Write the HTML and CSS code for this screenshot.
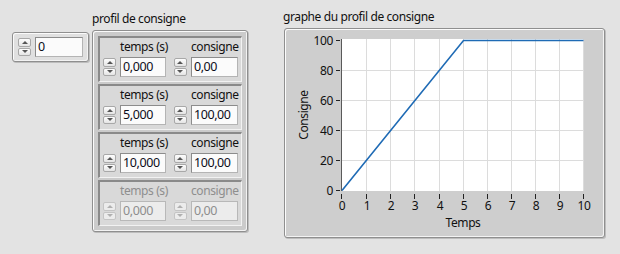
FILE: index.html
```html
<!DOCTYPE html>
<html lang="fr">
<head>
  <meta charset="UTF-8">
  <title>Profil de consigne</title>
  <link rel="stylesheet" href="styles.css">
</head>
<body>

  <div class="panel">

    <!-- array index -->
    <div class="index-ctl">
      <div class="spin"><span class="up"></span><span class="dn"></span></div>
      <div class="num w48">0</div>
    </div>

    <div class="array-col">
      <div class="caption">profil de consigne</div>
      <div class="array">
        <div class="elem">
          <div class="field">
            <div class="flabel">temps (s)</div>
            <div class="row">
              <div class="spin"><span class="up"></span><span class="dn"></span></div>
              <div class="num w46">0,000</div>
            </div>
          </div>
          <div class="field">
            <div class="flabel">consigne</div>
            <div class="row">
              <div class="spin"><span class="up"></span><span class="dn"></span></div>
              <div class="num w47">0,00</div>
            </div>
          </div>
        </div>
        <div class="elem">
          <div class="field">
            <div class="flabel">temps (s)</div>
            <div class="row">
              <div class="spin"><span class="up"></span><span class="dn"></span></div>
              <div class="num w46">5,000</div>
            </div>
          </div>
          <div class="field">
            <div class="flabel">consigne</div>
            <div class="row">
              <div class="spin"><span class="up"></span><span class="dn"></span></div>
              <div class="num w47">100,00</div>
            </div>
          </div>
        </div>
        <div class="elem">
          <div class="field">
            <div class="flabel">temps (s)</div>
            <div class="row">
              <div class="spin"><span class="up"></span><span class="dn"></span></div>
              <div class="num w46">10,000</div>
            </div>
          </div>
          <div class="field">
            <div class="flabel">consigne</div>
            <div class="row">
              <div class="spin"><span class="up"></span><span class="dn"></span></div>
              <div class="num w47">100,00</div>
            </div>
          </div>
        </div>
        <div class="elem disabled">
          <div class="field">
            <div class="flabel">temps (s)</div>
            <div class="row">
              <div class="spin"><span class="up"></span><span class="dn"></span></div>
              <div class="num w46">0,000</div>
            </div>
          </div>
          <div class="field">
            <div class="flabel">consigne</div>
            <div class="row">
              <div class="spin"><span class="up"></span><span class="dn"></span></div>
              <div class="num w47">0,00</div>
            </div>
          </div>
        </div>
      </div>
    </div>

    <div class="graph-col">
      <div class="caption cap-graph">graphe du profil de consigne</div>
      <div class="graph">
        <svg width="319" height="208" viewBox="0 0 319 208">
          <rect x="56" y="10" width="243" height="152" fill="#fff"/>
          <g stroke="#dcdcdc" stroke-width="1">
            <line x1="81.5" y1="10" x2="81.5" y2="162"/>
            <line x1="105.5" y1="10" x2="105.5" y2="162"/>
            <line x1="129.5" y1="10" x2="129.5" y2="162"/>
            <line x1="154.5" y1="10" x2="154.5" y2="162"/>
            <line x1="178.5" y1="10" x2="178.5" y2="162"/>
            <line x1="202.5" y1="10" x2="202.5" y2="162"/>
            <line x1="226.5" y1="10" x2="226.5" y2="162"/>
            <line x1="250.5" y1="10" x2="250.5" y2="162"/>
            <line x1="274.5" y1="10" x2="274.5" y2="162"/>
            <line x1="298.5" y1="10" x2="298.5" y2="162"/>
            <line x1="56" y1="41.5" x2="299" y2="41.5"/>
            <line x1="56" y1="71.5" x2="299" y2="71.5"/>
            <line x1="56" y1="101.5" x2="299" y2="101.5"/>
            <line x1="56" y1="131.5" x2="299" y2="131.5"/>
          </g>
          <line x1="56.5" y1="10" x2="56.5" y2="162" stroke="#5a5a5a"/>
          <g stroke="#222" stroke-width="1">
            <line x1="51" y1="11.5" x2="55" y2="11.5"/>
            <line x1="51" y1="41.5" x2="55" y2="41.5"/>
            <line x1="51" y1="71.5" x2="55" y2="71.5"/>
            <line x1="51" y1="101.5" x2="55" y2="101.5"/>
            <line x1="51" y1="131.5" x2="55" y2="131.5"/>
            <line x1="51" y1="161.5" x2="55" y2="161.5"/>
            <line x1="56.5" y1="165" x2="56.5" y2="170"/>
            <line x1="81.5" y1="165" x2="81.5" y2="170"/>
            <line x1="105.5" y1="165" x2="105.5" y2="170"/>
            <line x1="129.5" y1="165" x2="129.5" y2="170"/>
            <line x1="154.5" y1="165" x2="154.5" y2="170"/>
            <line x1="178.5" y1="165" x2="178.5" y2="170"/>
            <line x1="202.5" y1="165" x2="202.5" y2="170"/>
            <line x1="226.5" y1="165" x2="226.5" y2="170"/>
            <line x1="250.5" y1="165" x2="250.5" y2="170"/>
            <line x1="274.5" y1="165" x2="274.5" y2="170"/>
            <line x1="298.5" y1="165" x2="298.5" y2="170"/>
          </g>
          <g class="axis-num" text-anchor="end">
            <text x="48" y="16">100</text>
            <text x="48" y="46">80</text>
            <text x="48" y="76">60</text>
            <text x="48" y="106">40</text>
            <text x="48" y="136">20</text>
            <text x="48" y="166">0</text>
          </g>
          <g class="axis-num" text-anchor="middle">
            <text x="57" y="181">0</text>
            <text x="82" y="181">1</text>
            <text x="106" y="181">2</text>
            <text x="130" y="181">3</text>
            <text x="155" y="181">4</text>
            <text x="179" y="181">5</text>
            <text x="203" y="181">6</text>
            <text x="227" y="181">7</text>
            <text x="251" y="181">8</text>
            <text x="275" y="181">9</text>
            <text x="299" y="181">10</text>
          </g>
          <text class="axis-name" x="178" y="198" text-anchor="middle">Temps</text>
          <text class="axis-name" transform="translate(23 86) rotate(-90)" text-anchor="middle">Consigne</text>
          <polyline points="57,161.5 178.5,11.5 298.5,11.5" fill="none" stroke="#1f6bb5" stroke-width="1.6"/>
        </svg>
      </div>
    </div>

  </div>

</body>
</html>
```

FILE: styles.css
```css
body {
  margin: 0;
  background-color: #e3e3e3;
  font-family: 'Noto Sans', sans-serif;
  font-size: 12px;
  letter-spacing: -0.4px;
  color: #111;
}

.panel {
  width: 620px;
  height: 254px;
  box-sizing: border-box;
  padding-left: 12px;
  display: flex;
  align-items: flex-start;
}

.caption {
  line-height: 16px;
  margin-bottom: 3px;
  white-space: nowrap;
}

/* raised LabVIEW style frame */
.index-ctl,
.array,
.graph {
  box-sizing: border-box;
  border: 1px solid #8f8f8f;
  border-radius: 3px;
  box-shadow: inset 1px 1px 0 #fbfbfb, inset -1px -1px 0 #f3f3f3, 1px 1px 0 #bdbdbd;
}

.index-ctl {
  margin-top: 32px;
  width: 77px;
  height: 30px;
  padding-left: 5px;
  display: flex;
  align-items: center;
  gap: 4px;
  background: #e0e0e0;
}

.spin {
  width: 13px;
  height: 18px;
  display: flex;
  flex-direction: column;
  gap: 1px;
}

.spin span {
  flex: 1;
  box-sizing: border-box;
  border: 1px solid #a8a8a8;
  border-radius: 2px;
  background: linear-gradient(#fdfdfd, #e4e4e4);
  display: flex;
  align-items: center;
  justify-content: center;
}

.spin .up::after,
.spin .dn::after {
  content: "";
  width: 0;
  height: 0;
  border-left: 3px solid transparent;
  border-right: 3px solid transparent;
}

.spin .up::after {
  border-bottom: 3px solid #555;
}

.spin .dn::after {
  border-top: 3px solid #555;
}

.num {
  box-sizing: border-box;
  height: 20px;
  line-height: 18px;
  padding-left: 2px;
  border: 1px solid #8c8c8c;
  border-right-color: #b4b4b4;
  border-bottom-color: #b4b4b4;
  background: #fbfbfb;
  color: #0d0d1a;
  font-size: 12.5px;
}

.w46 { width: 46px; }
.w47 { width: 47px; }
.w48 { width: 48px; }

.array-col {
  margin-left: 3px;
  padding-top: 11px;
}

.array {
  width: 156px;
  height: 202px;
  padding: 5px;
  display: flex;
  flex-direction: column;
  gap: 2px;
  background: #cbcbcb;
}

.elem {
  box-sizing: border-box;
  height: 46px;
  padding: 1px 0 0 3px;
  display: flex;
  gap: 6px;
  background: #d9d9d9;
  border-top: 2px solid #8a8a8a;
  border-left: 2px solid #8a8a8a;
  border-right: 1px solid #f2f2f2;
  border-bottom: 1px solid #f2f2f2;
}

.flabel {
  line-height: 16px;
  margin: 0 0 2px 17px;
  white-space: nowrap;
}

.row {
  display: flex;
  align-items: center;
  gap: 4px;
}

.disabled .flabel,
.disabled .num {
  color: #8e8e8e;
}

.disabled .num {
  background: #ececec;
  border-color: #b8b8b8;
}

.disabled .spin span {
  border-color: #c4c4c4;
  background: #ececec;
}

.disabled .spin .up::after {
  border-bottom-color: #b0b0b0;
}

.disabled .spin .dn::after {
  border-top-color: #b0b0b0;
}

.graph-col {
  margin-left: 36px;
  padding-top: 9px;
}

.cap-graph {
  margin-left: -1px;
}

.graph {
  width: 321px;
  height: 210px;
  background: #cecece;
}

.graph svg {
  display: block;
}

.axis-num,
.axis-name {
  font-family: 'Noto Sans', sans-serif;
  font-size: 12px;
  letter-spacing: -0.4px;
  fill: #111;
}
```
